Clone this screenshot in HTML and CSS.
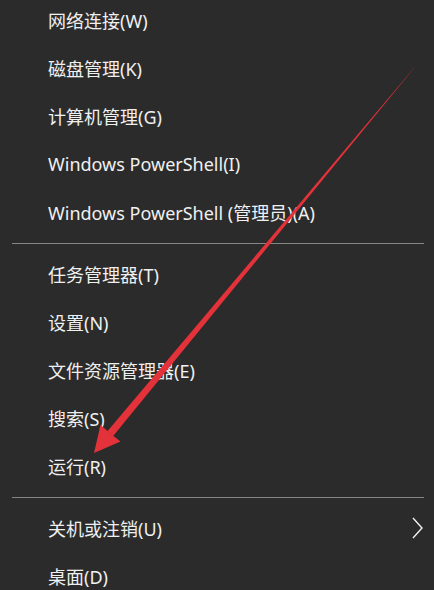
FILE: index.html
```html
<!DOCTYPE html>
<html lang="zh-CN">
<head>
    <meta charset="UTF-8">
    <meta name="viewport" content="width=device-width, initial-scale=1.0">
    <title>Win+X 菜单</title>
    <link rel="stylesheet" href="styles.css">
</head>
<body>
    <div class="menu">
        <ul class="group">
            <li class="item">网络连接(W)</li>
            <li class="item">磁盘管理(K)</li>
            <li class="item">计算机管理(G)</li>
            <li class="item">Windows PowerShell(I)</li>
            <li class="item">Windows PowerShell (管理员)(A)</li>
        </ul>
        <div class="separator"></div>
        <ul class="group">
            <li class="item">任务管理器(T)</li>
            <li class="item">设置(N)</li>
            <li class="item">文件资源管理器(E)</li>
            <li class="item">搜索(S)</li>
            <li class="item">运行(R)</li>
        </ul>
        <div class="separator"></div>
        <ul class="group">
            <li class="item has-sub">
                <span>关机或注销(U)</span>
                <svg class="chevron" width="12" height="22" viewBox="0 0 12 22">
                    <polyline points="1,1 10,11 1,21" fill="none" stroke="#f0f0f0" stroke-width="1.4"/>
                </svg>
            </li>
            <li class="item">桌面(D)</li>
        </ul>
    </div>

    <!-- annotation arrow drawn over the menu -->
    <svg class="arrow" width="434" height="590" viewBox="0 0 434 590">
        <polygon points="414.3,67.7 413.7,68.3 107.4,431.2 113.2,436" fill="#e3323a"/>
        <polygon points="94,453 100.5,425 111,434 120.5,441.5" fill="#e3323a"/>
    </svg>
</body>
</html>
```

FILE: styles.css
```css
* {
    box-sizing: border-box;
    margin: 0;
    padding: 0;
}

html, body {
    height: 100%;
}

body {
    background-color: #2b2b2b;
    color: #f0f0f0;
    font-family: "Noto Sans", "Noto Sans CJK SC", sans-serif;
    font-size: 18px;
    overflow: hidden;
    position: relative;
}

.menu {
    margin-top: -4px;
}

.group {
    list-style: none;
}

.item {
    height: 48px;
    display: flex;
    align-items: center;
    padding-left: 48px;
    padding-right: 10px;
    white-space: nowrap;
}

.has-sub {
    justify-content: space-between;
}

.chevron {
    display: block;
}

.separator {
    height: 14px;
    display: flex;
    align-items: center;
    padding: 0 10px 0 12px;
}

.separator::after {
    content: "";
    flex: 1;
    height: 1px;
    background-color: #858585;
}

.arrow {
    position: absolute;
    top: 0;
    left: 0;
    pointer-events: none;
}
```
